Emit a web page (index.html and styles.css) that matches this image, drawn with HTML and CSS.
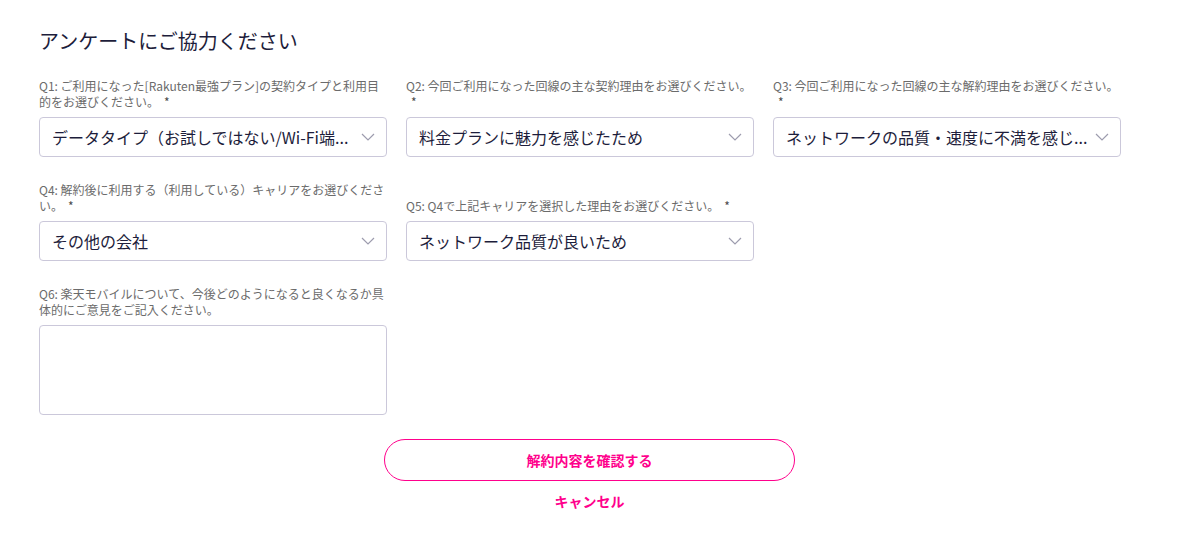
FILE: index.html
```html
<!DOCTYPE html>
<html lang="ja">
<head>
<meta charset="utf-8">
<title>アンケート</title>
<link rel="stylesheet" href="styles.css">
</head>
<body>
<main class="page">
  <h1 class="title">アンケートにご協力ください</h1>
  <div class="grid">
    <div class="field">
      <label class="label">Q1: ご利用になった[Rakuten最強プラン]の契約タイプと利用目的をお選びください。<span class="req">*</span></label>
      <div class="select"><span class="value">データタイプ（お試しではない/Wi-Fi端...</span><svg class="chev" viewBox="0 0 14 8" width="14" height="8"><path d="M1 1l6 6 6-6" fill="none" stroke="#9d9cae" stroke-width="1.2"/></svg></div>
    </div>
    <div class="field">
      <label class="label">Q2: 今回ご利用になった回線の主な契約理由をお選びください。<span class="req">*</span></label>
      <div class="select"><span class="value">料金プランに魅力を感じたため</span><svg class="chev" viewBox="0 0 14 8" width="14" height="8"><path d="M1 1l6 6 6-6" fill="none" stroke="#9d9cae" stroke-width="1.2"/></svg></div>
    </div>
    <div class="field">
      <label class="label">Q3: 今回ご利用になった回線の主な解約理由をお選びください。<span class="req">*</span></label>
      <div class="select"><span class="value">ネットワークの品質・速度に不満を感じ...</span><svg class="chev" viewBox="0 0 14 8" width="14" height="8"><path d="M1 1l6 6 6-6" fill="none" stroke="#9d9cae" stroke-width="1.2"/></svg></div>
    </div>
    <div class="field">
      <label class="label">Q4: 解約後に利用する（利用している）キャリアをお選びください。<span class="req">*</span></label>
      <div class="select"><span class="value">その他の会社</span><svg class="chev" viewBox="0 0 14 8" width="14" height="8"><path d="M1 1l6 6 6-6" fill="none" stroke="#9d9cae" stroke-width="1.2"/></svg></div>
    </div>
    <div class="field">
      <label class="label">Q5: Q4で上記キャリアを選択した理由をお選びください。<span class="req">*</span></label>
      <div class="select"><span class="value">ネットワーク品質が良いため</span><svg class="chev" viewBox="0 0 14 8" width="14" height="8"><path d="M1 1l6 6 6-6" fill="none" stroke="#9d9cae" stroke-width="1.2"/></svg></div>
    </div>
    <div class="field empty"></div>
    <div class="field">
      <label class="label">Q6: 楽天モバイルについて、今後どのようになると良くなるか具体的にご意見をご記入ください。</label>
      <textarea class="textarea"></textarea>
    </div>
  </div>
  <div class="actions">
    <button class="btn-primary" type="button">解約内容を確認する</button>
    <a class="btn-cancel" href="#">キャンセル</a>
  </div>
</main>
</body>
</html>
```
FILE: styles.css
```css
* { box-sizing: border-box; }
html, body { margin: 0; padding: 0; background: #fff; }
body {
  font-family: "Noto Sans CJK JP", "Noto Sans", sans-serif;
  color: #1d1d3b;
}
.page {
  padding: 24px 45px 0 39px;
}
.title {
  margin: 0;
  font-size: 20px;
  font-weight: 400;
  line-height: 34px;
  color: #1d1d3b;
}
.grid {
  margin-top: 20px;
  display: grid;
  grid-template-columns: 348px 348px 348px;
  column-gap: 19px;
  row-gap: 25px;
}
.field {
  display: flex;
  flex-direction: column;
  justify-content: flex-end;
}
.label {
  display: block;
  font-size: 12px;
  line-height: 16px;
  color: #6b6b6b;
  margin-bottom: 7px;
}
.req {
  margin-left: 5px;
  color: #4a4a4a;
}
.select {
  height: 40px;
  border: 1px solid #cbc8da;
  border-radius: 4px;
  display: flex;
  align-items: center;
  padding: 0 11px 0 12px;
  gap: 6px;
  background: #fff;
}
.value {
  flex: 1;
  min-width: 0;
  font-size: 16px;
  line-height: 22px;
  color: #1d1d3b;
  white-space: nowrap;
}
.chev { flex: none; }
.textarea {
  display: block;
  width: 348px;
  height: 90px;
  border: 1px solid #cbc8da;
  border-radius: 4px;
  resize: none;
  font-family: inherit;
  padding: 8px 12px;
}
.actions {
  margin-top: 24px;
  display: flex;
  flex-direction: column;
  align-items: center;
}
.btn-primary {
  width: 411px;
  height: 42px;
  border: 1.5px solid #ff008c;
  border-radius: 21px;
  background: #fff;
  color: #ff008c;
  font-family: inherit;
  font-size: 14px;
  font-weight: 700;
  cursor: pointer;
}
.btn-cancel {
  margin-top: 10px;
  font-size: 14px;
  line-height: 20px;
  font-weight: 700;
  color: #ff008c;
  text-decoration: none;
}
```
